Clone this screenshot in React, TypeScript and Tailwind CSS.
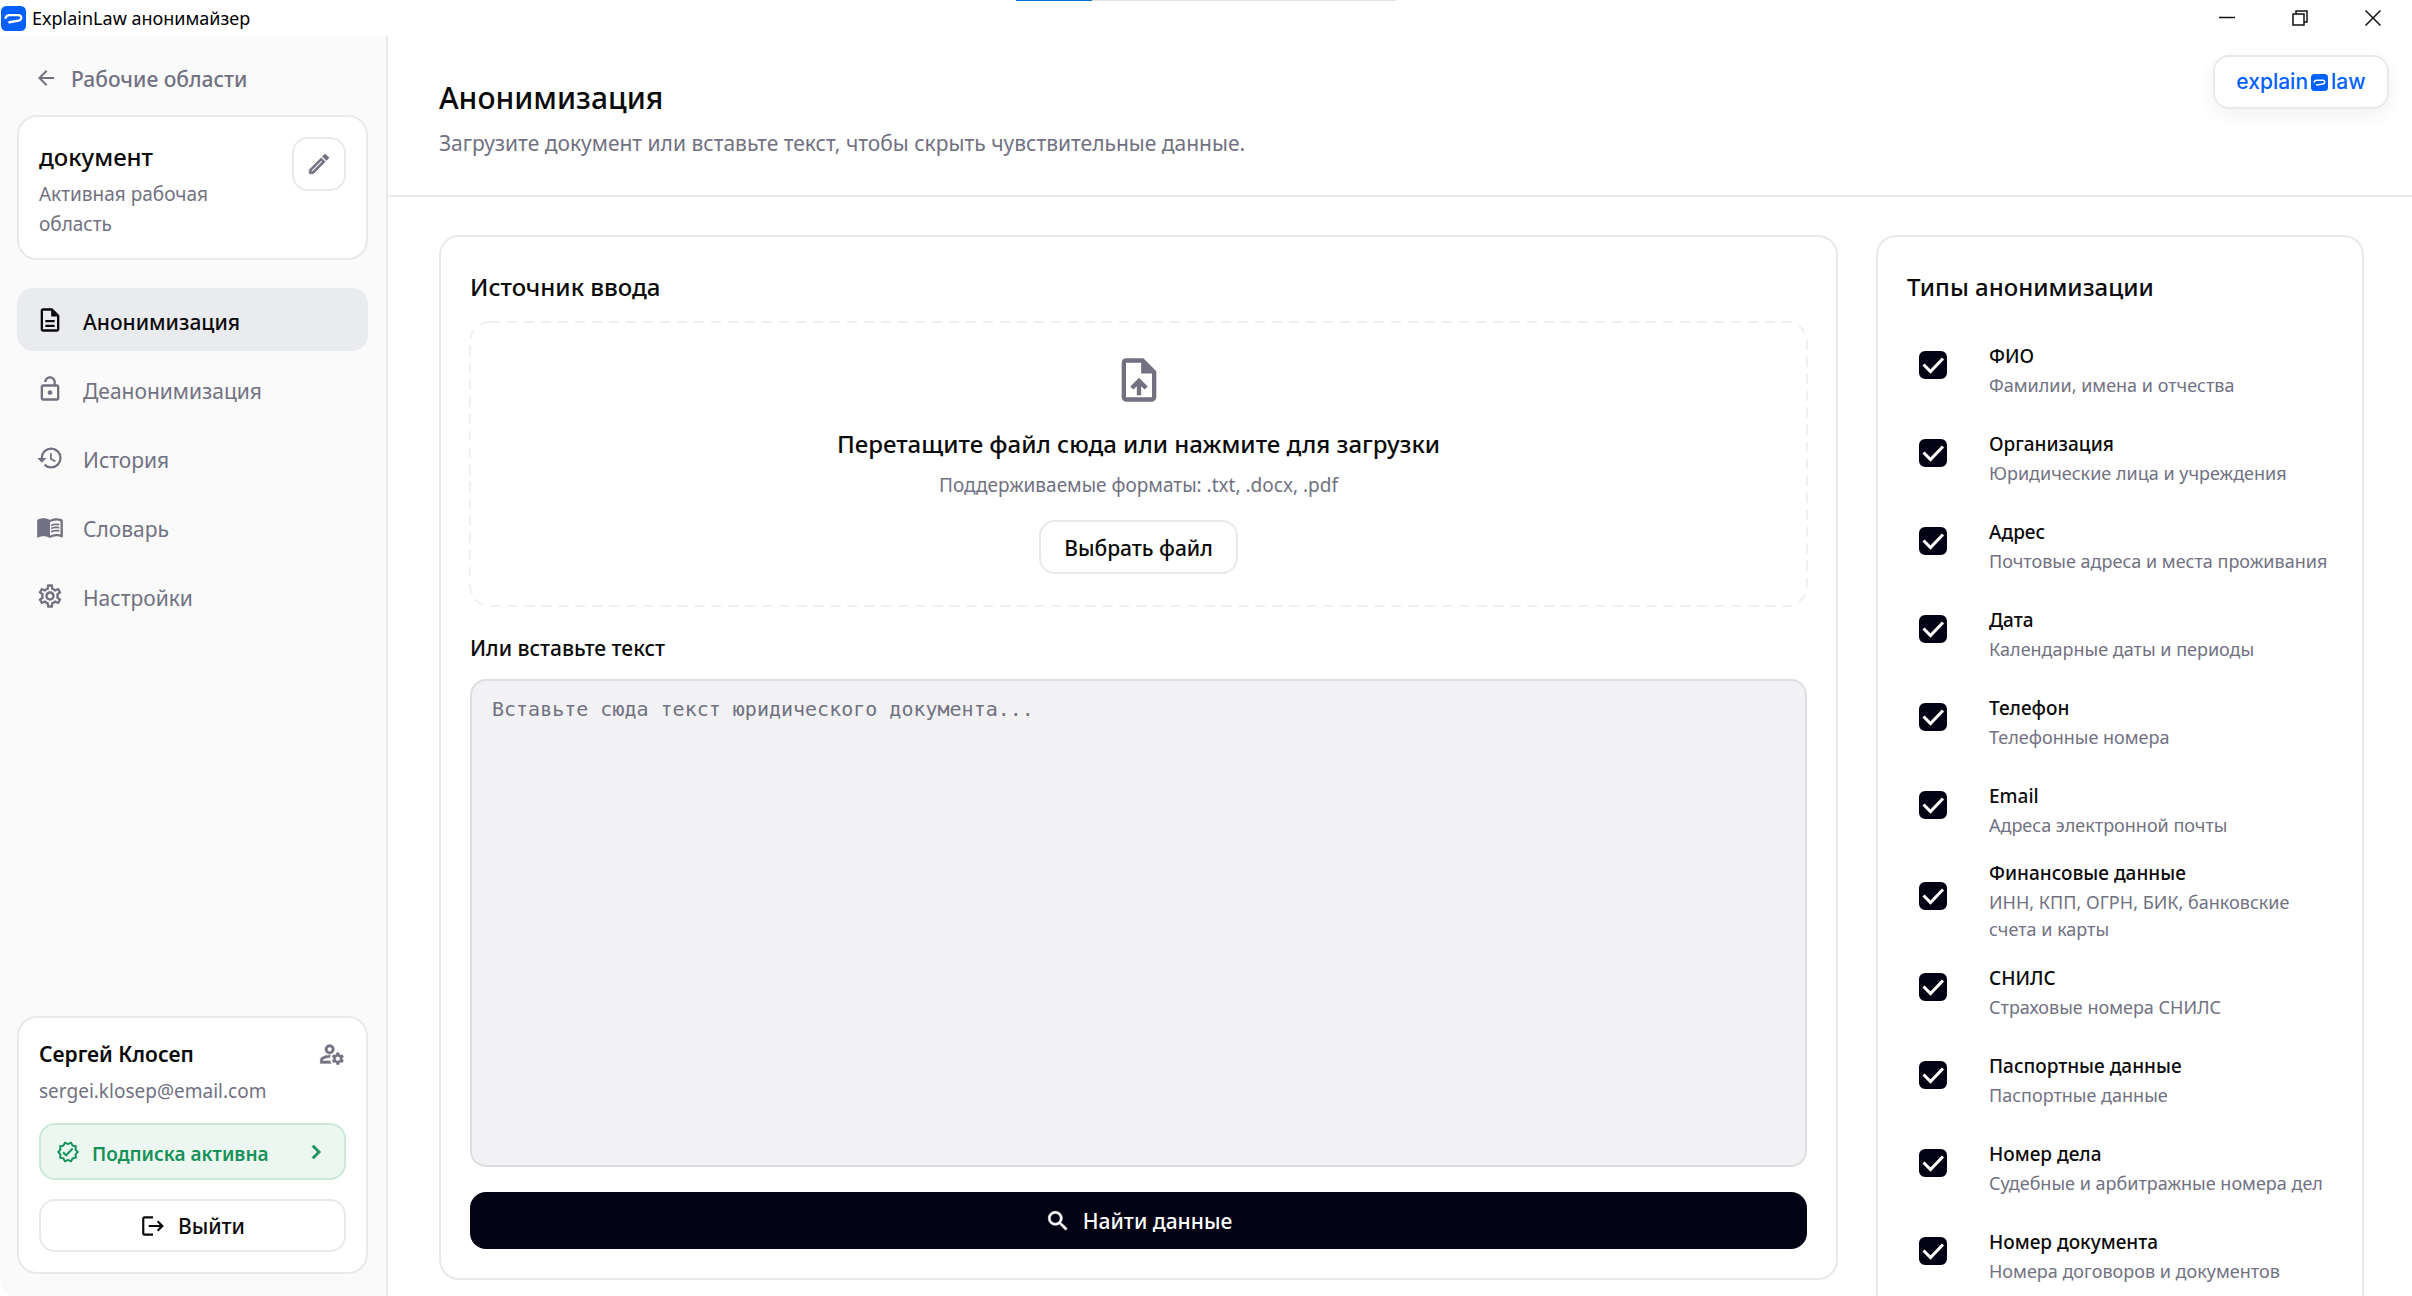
import type { ReactNode } from 'react';
import type { IconType } from 'react-icons';
import {
  MdArrowBack,
  MdChevronRight,
  MdHistory,
  MdLogout,
  MdMenuBook,
  MdOutlineDescription,
  MdOutlineEdit,
  MdOutlineLockOpen,
  MdOutlineManageAccounts,
  MdOutlineSettings,
  MdOutlineUploadFile,
  MdOutlineVerified,
  MdSearch,
} from 'react-icons/md';
import clsx from 'clsx';

type NavItem = {
  label: string;
  icon: IconType;
  active?: boolean;
};

type AnonymizationType = {
  id: string;
  title: string;
  description: string;
};

const navItems: NavItem[] = [
  { label: 'Анонимизация', icon: MdOutlineDescription, active: true },
  { label: 'Деанонимизация', icon: MdOutlineLockOpen },
  { label: 'История', icon: MdHistory },
  { label: 'Словарь', icon: MdMenuBook },
  { label: 'Настройки', icon: MdOutlineSettings },
];

const anonymizationTypes: AnonymizationType[] = [
  { id: 'name', title: 'ФИО', description: 'Фамилии, имена и отчества' },
  { id: 'org', title: 'Организация', description: 'Юридические лица и учреждения' },
  { id: 'address', title: 'Адрес', description: 'Почтовые адреса и места проживания' },
  { id: 'date', title: 'Дата', description: 'Календарные даты и периоды' },
  { id: 'phone', title: 'Телефон', description: 'Телефонные номера' },
  { id: 'email', title: 'Email', description: 'Адреса электронной почты' },
  {
    id: 'finance',
    title: 'Финансовые данные',
    description: 'ИНН, КПП, ОГРН, БИК, банковские счета и карты',
  },
  { id: 'snils', title: 'СНИЛС', description: 'Страховые номера СНИЛС' },
  { id: 'passport', title: 'Паспортные данные', description: 'Паспортные данные' },
  { id: 'case', title: 'Номер дела', description: 'Судебные и арбитражные номера дел' },
  { id: 'document', title: 'Номер документа', description: 'Номера договоров и документов' },
];

// Thickens a Material icon; its empty bounding path must stay unstroked.
function BoldIcon({ icon: Icon, className }: { icon: IconType; className?: string }) {
  return <Icon strokeWidth={0.5} className={clsx('[&_[fill=none]]:stroke-none', className)} />;
}

function LogoMark({ className }: { className?: string }) {
  return (
    <svg viewBox="0 0 24 24" className={className} aria-hidden="true">
      <rect width="24" height="24" rx="5" fill="#0061ff" />
      <path
        d="M4.4 11.4C5 9.4 6.2 8.8 8.2 8.8h8.4c3.6 0 3.8 4.6.4 5.2l-9 1.6"
        fill="none"
        stroke="#fff"
        strokeWidth="2.2"
        strokeLinecap="round"
      />
    </svg>
  );
}

function WindowButton({ label, children }: { label: string; children: ReactNode }) {
  return (
    <button type="button" aria-label={label} className="flex w-[73px] items-center justify-center">
      <svg viewBox="0 0 16 16" className="size-4" fill="none" stroke="#111" strokeWidth="1.5">
        {children}
      </svg>
    </button>
  );
}

function TitleBar() {
  return (
    <div className="relative flex h-9 shrink-0 justify-between bg-white">
      <div className="flex items-center gap-1.5 pl-px">
        <LogoMark className="size-[25px]" />
        <span className="text-[18px] leading-6 text-black">ExplainLaw анонимайзер</span>
      </div>
      <div className="flex pr-[3px]">
        <WindowButton label="Свернуть">
          <path d="M0 7.5h16" />
        </WindowButton>
        <WindowButton label="Восстановить">
          <path d="M1 4h11v11H1zM4 4V1h11v11h-3" />
        </WindowButton>
        <WindowButton label="Закрыть">
          <path d="M.5.5l15 15M15.5.5l-15 15" />
        </WindowButton>
      </div>
      <div className="absolute top-0 left-1/2 flex h-px w-[380px] -translate-x-1/2 bg-[#e1e1e1]">
        <div className="w-1/5 bg-[#0070e0]" />
      </div>
    </div>
  );
}

function Sidebar() {
  return (
    <aside className="flex w-[388px] shrink-0 flex-col rounded-bl-2xl border-r-2 border-[#e9e9ea] bg-[#fafafa] pr-[18px] pb-[22px] pl-[17px]">
      <a
        href="#workspaces"
        className="mt-6 flex h-9 items-center gap-[13px] pl-[17px] text-[21px] leading-8 font-medium text-[#717182]"
      >
        <MdArrowBack className="size-6" />
        <span className="pt-0.5">Рабочие области</span>
      </a>

      <div className="mt-[19px] flex h-[145px] items-start justify-between rounded-[20px] border-2 border-[#e9e9ea] bg-white p-5">
        <div className="pt-1">
          <p className="text-[24px] leading-8 font-medium text-[#0a0a0a]">документ</p>
          <p className="mt-1.5 w-[180px] text-[19px] leading-[30px] text-[#717182]">
            Активная рабочая область
          </p>
        </div>
        <button
          type="button"
          aria-label="Изменить"
          className="flex size-[54px] shrink-0 items-center justify-center rounded-2xl border-2 border-[#e9e9ea] text-[#717182]"
        >
          <BoldIcon icon={MdOutlineEdit} className="size-[26px]" />
        </button>
      </div>

      <nav className="mt-7 flex flex-col gap-1.5">
        {navItems.map(({ label, icon: Icon, active }) => (
          <a
            key={label}
            href="#"
            aria-current={active ? 'page' : undefined}
            className={clsx(
              'flex h-[63px] items-center gap-[19px] rounded-2xl pl-[19px] text-[21px] leading-8',
              active ? 'bg-[#e9ebef] font-medium text-[#0a0a0a]' : 'text-[#717182]',
            )}
          >
            <Icon className="size-7" />
            <span className="pt-1">{label}</span>
          </a>
        ))}
      </nav>

      <div className="mt-auto rounded-[20px] border-2 border-[#e9e9ea] bg-white p-5">
        <div className="flex items-center justify-between text-[21px] leading-8 font-semibold text-[#0a0a0a]">
          Сергей Клосеп
          <button type="button" aria-label="Управление аккаунтом" className="text-[#717182]">
            <BoldIcon icon={MdOutlineManageAccounts} className="size-7" />
          </button>
        </div>
        <p className="mt-1.5 text-[19px] leading-[30px] text-[#717182]">sergei.klosep@email.com</p>
        <button
          type="button"
          className="mt-[17px] flex h-[57px] w-full items-center rounded-2xl border-2 border-[#cce8d9] bg-[#edf7f1] pr-3.5 pl-[15px] text-[19px] leading-7 font-semibold text-[#16915a]"
        >
          <MdOutlineVerified className="size-6" />
          <span className="pt-1 pl-3">Подписка активна</span>
          <BoldIcon icon={MdChevronRight} className="ml-auto size-7" />
        </button>
        <button
          type="button"
          className="mt-[19px] flex h-[53px] w-full items-center justify-center gap-3 rounded-2xl border-2 border-[#e9e9ea] text-[21px] leading-8 font-medium text-[#0a0a0a]"
        >
          <MdLogout className="size-[26px]" />
          Выйти
        </button>
      </div>
    </aside>
  );
}

function PageHeader() {
  return (
    <header className="flex shrink-0 items-start justify-between border-b-2 border-[#e9e9ea] pt-[19px] pr-[23px] pb-9 pl-[51px]">
      <div className="pt-[23px]">
        <h1 className="text-[30px] leading-10 font-medium text-[#0a0a0a]">Анонимизация</h1>
        <p className="mt-[9px] text-[21px] leading-8 text-[#717182]">
          Загрузите документ или вставьте текст, чтобы скрыть чувствительные данные.
        </p>
      </div>
      <a
        href="#about"
        className="flex h-[54px] w-[176px] items-center justify-center gap-[3px] rounded-2xl border-2 border-[#e9e9ea] bg-white font-['Inter',sans-serif] text-[21px] leading-6 font-medium text-[#0061ff] shadow-[0_6px_20px_rgba(0,0,0,0.06)]"
      >
        explain
        <LogoMark className="size-[17px]" />
        law
      </a>
    </header>
  );
}

function DropZone() {
  return (
    <div className="relative flex flex-col items-center pt-8 pb-8">
      <svg className="pointer-events-none absolute inset-0 size-full overflow-visible" aria-hidden="true">
        <rect
          width="100%"
          height="100%"
          rx="20"
          fill="none"
          stroke="#f0f0f1"
          strokeWidth="2"
          strokeDasharray="10 7"
        />
      </svg>
      <MdOutlineUploadFile className="size-[52px] text-[#717182]" />
      <p className="mt-5 text-[24px] leading-9 font-medium text-[#0a0a0a]">
        Перетащите файл сюда или нажмите для загрузки
      </p>
      <p className="mt-2 text-[19px] leading-[30px] text-[#717182]">
        Поддерживаемые форматы: .txt, .docx, .pdf
      </p>
      <button
        type="button"
        className="mt-5 h-[54px] rounded-2xl border-2 border-[#e9e9ea] bg-white px-[23px] pt-0.5 text-[21px] leading-8 font-medium text-[#0a0a0a]"
      >
        Выбрать файл
      </button>
    </div>
  );
}

function SourceCard() {
  return (
    <section className="mb-4 flex min-w-0 flex-1 flex-col rounded-[20px] border-2 border-[#e9e9ea] px-[29px] pt-8 pb-[29px]">
      <h2 className="mb-[17px] text-[24px] leading-9 font-medium text-[#0a0a0a]">Источник ввода</h2>
      <DropZone />
      <label
        htmlFor="source-text"
        className="mt-[26px] text-[21px] leading-8 font-medium text-[#0a0a0a]"
      >
        Или вставьте текст
      </label>
      <textarea
        id="source-text"
        placeholder="Вставьте сюда текст юридического документа..."
        className="mt-[15px] min-h-40 flex-1 resize-none rounded-2xl border-2 border-[#dedee0] bg-[#f2f2f4] px-5 py-3.5 font-['DejaVu_Sans_Mono',monospace] text-[20px] leading-7 placeholder:text-[#717182]"
      />
      <button
        type="button"
        className="mt-[25px] flex h-[57px] shrink-0 items-center justify-center gap-3 rounded-2xl bg-[#030213] text-[21px] leading-8 font-medium text-white"
      >
        <BoldIcon icon={MdSearch} className="size-[26px]" />
        Найти данные
      </button>
    </section>
  );
}

function TypeOption({ id, title, description }: AnonymizationType) {
  return (
    <label htmlFor={id} className="flex min-h-[88px] items-center gap-[42px]">
      <span className="grid shrink-0 place-items-center">
        <input
          id={id}
          type="checkbox"
          defaultChecked
          className="peer col-start-1 row-start-1 size-7 appearance-none rounded-md border-2 border-[#717182] checked:border-[#030213] checked:bg-[#030213]"
        />
        <svg
          viewBox="0 0 28 28"
          className="pointer-events-none invisible col-start-1 row-start-1 size-7 peer-checked:visible"
          fill="none"
          stroke="#fff"
          strokeWidth="3"
          aria-hidden="true"
        >
          <path d="M4.5 13.5l7 7L24 7.5" />
        </svg>
      </span>
      <span className="flex flex-col pt-2">
        <span className="text-[19px] leading-8 font-medium text-[#0a0a0a]">{title}</span>
        <span className="text-[18px] leading-[27px] text-[#717182]">{description}</span>
      </span>
    </label>
  );
}

function TypesCard() {
  return (
    <section className="w-[488px] shrink-0 overflow-hidden rounded-t-[20px] border-2 border-b-0 border-[#e9e9ea] px-[29px] pt-8">
      <h2 className="mb-4 text-[24px] leading-9 font-medium text-[#0a0a0a]">Типы анонимизации</h2>
      <div className="pl-3">
        {anonymizationTypes.map((type) => (
          <TypeOption key={type.id} {...type} />
        ))}
      </div>
    </section>
  );
}

export default function App() {
  return (
    <div className="flex h-screen flex-col overflow-hidden bg-white font-['Noto_Sans',sans-serif]">
      <TitleBar />
      <div className="flex min-h-0 flex-1">
        <Sidebar />
        <main className="flex min-w-0 flex-1 flex-col">
          <PageHeader />
          <div className="flex min-h-0 flex-1 gap-[38px] pt-[38px] pr-12 pl-[51px]">
            <SourceCard />
            <TypesCard />
          </div>
        </main>
      </div>
    </div>
  );
}
